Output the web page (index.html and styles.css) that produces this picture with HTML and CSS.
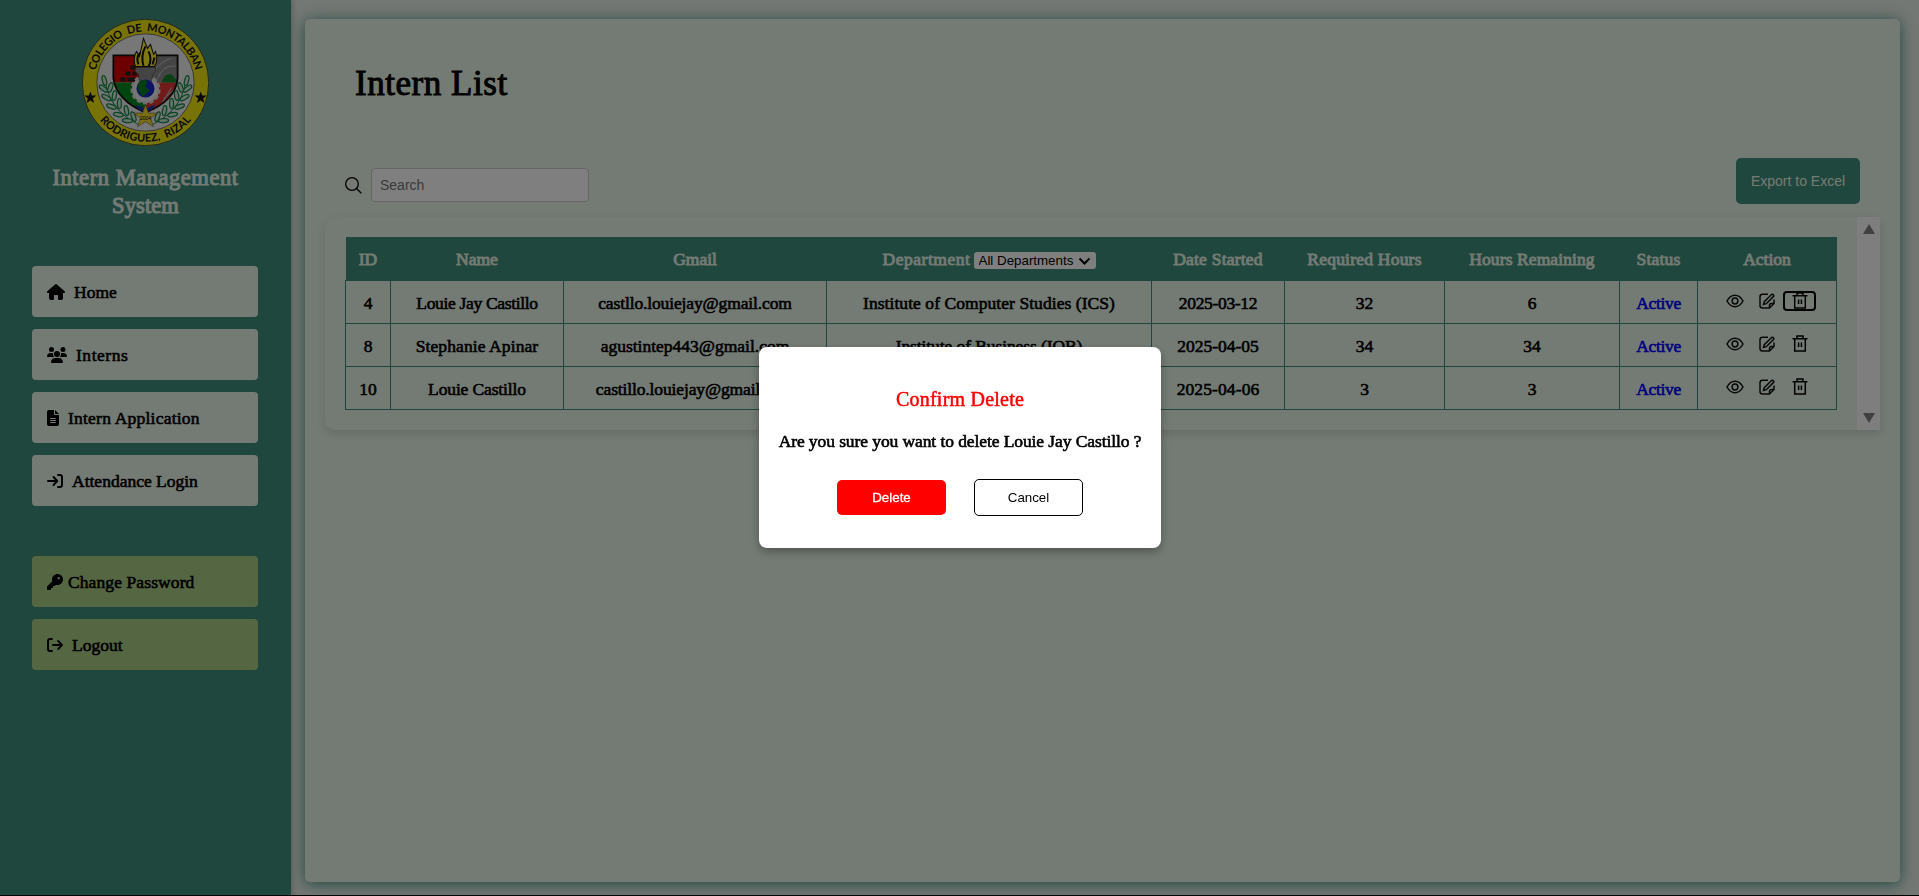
FILE: index.html
```html
<!DOCTYPE html>
<html lang="en">
<head>
<meta charset="utf-8">
<title>Intern List</title>
<link rel="stylesheet" href="styles.css">
</head>
<body>
<svg class="sprite" width="0" height="0" aria-hidden="true">
  <symbol id="eye" viewBox="0 0 18 14"><path d="M1 7C3 3.300 6 1.300 9 1.300S15 3.300 17 7C15 10.700 12 12.700 9 12.700S3 10.700 1 7Z"/><circle cx="9" cy="7" r="2.900"/></symbol>
  <symbol id="edit" viewBox="0 0 16 16"><path d="M9 1.200H3.500Q1 1.200 1 3.700V12.500Q1 15 3.500 15H10.500L15 10.500V6.500M10.500 15V12.500Q10.500 10.500 12.500 10.500H15"/><path d="M4.500 11.500 5.300 8.700 12.500 1.500Q13.700.9 14.500 2T14.300 3.700L7.300 10.700Z"/></symbol>
  <symbol id="trash" viewBox="0 0 16 17"><path d="M.5 3.700H15.500M5 3.500V1H11V3.500M2.700 4V16H13.300V4M6.600 7.500V12M9.400 7.500V12"/></symbol>
</svg>
<div class="app">
  <aside class="sidebar">
    <svg class="logo" viewBox="0.700 0.700 126.600 126.600">
      <defs>
        <path id="arc-top" d="M13 64A51 51 0 0 1 115 64"/>
        <path id="arc-bottom" d="M5 64A59 59 0 0 0 123 64"/>
        <clipPath id="shield"><path d="M32 37H96V60Q94 82 64 94Q35 82 32 60Z"/></clipPath>
        <g id="branch">
          <path class="stem" d="M24 64Q29 92 57 106"/>
          <g class="leaves">
            <ellipse cx="23" cy="62" rx="2" ry="5" transform="rotate(-15 23 62)"/>
            <ellipse cx="22" cy="70" rx="2" ry="5" transform="rotate(-50 22 70)"/><ellipse cx="29" cy="69" rx="2" ry="5" transform="rotate(20 29 69)"/>
            <ellipse cx="25" cy="79" rx="2" ry="5" transform="rotate(-60 25 79)"/><ellipse cx="33" cy="77" rx="2" ry="5" transform="rotate(10 33 77)"/>
            <ellipse cx="30" cy="88" rx="2" ry="5" transform="rotate(-70 30 88)"/><ellipse cx="38" cy="85" rx="2" ry="5" transform="rotate(0 38 85)"/>
            <ellipse cx="37" cy="96" rx="2" ry="5" transform="rotate(-80 37 96)"/><ellipse cx="45" cy="92" rx="2" ry="5" transform="rotate(-10 45 92)"/>
            <ellipse cx="46" cy="102" rx="2" ry="5" transform="rotate(-85 46 102)"/><ellipse cx="52" cy="98" rx="2" ry="5" transform="rotate(-20 52 98)"/>
          </g>
        </g>
      </defs>
      <circle cx="64" cy="64" r="63" fill="#f0e60a" stroke="#333" stroke-width=".8"/>
      <circle cx="64" cy="64" r="48.500" fill="#eee" stroke="#555" stroke-width=".8"/>
      <g clip-path="url(#shield)">
        <path fill="#d90000" d="M30 35H64V64H30Z"/><path fill="#888" d="M64 35H98V64H64Z"/>
        <path fill="#008a20" d="M30 64H64V96H30Z"/><path fill="#e03434" d="M64 64H98V96H64Z"/>
        <path fill="#222" d="M49 47h5v4h-5zM44 53h5v4h-5zM51 53h4v4h-4zM39 59h5v4h-5zM46 59h8v4h-8z"/>
        <path fill="#168028" d="M80 64Q83 54 90 56L97 64Z"/>
        <path fill="none" stroke="#bbb" d="M76 60Q82 45 96 48M72 53Q80 42 90 40M76 92 90 69M82 80 94 70"/>
      </g>
      <path fill="none" stroke="#111" stroke-width="1.800" d="M32 37H96V60Q94 82 64 94Q35 82 32 60Z"/>
      <use href="#branch"/><use href="#branch" transform="translate(128) scale(-1 1)"/>
      <circle cx="64" cy="71" r="13.500" fill="#eee" stroke="#ddd" stroke-width="3" stroke-dasharray="4 2.500"/>
      <path fill="#888" stroke="#444" stroke-width=".6" d="M54 49H74V53L71 56 70 63H58L57 56 54 53Z"/>
      <circle cx="64" cy="70" r="9" fill="#1a26c4"/><path fill="#087f28" d="M56 66Q59 60 66 62L64 68 68 72 62 78Q56 75 56 66Z"/>
      <path fill="#ffee20" stroke="#111" stroke-width="1" d="M54 48Q51 40 55 33L58 38 62 20 66 30 69 26 72 36 74 33Q77 42 73 48Z"/>
      <path fill="none" stroke="#111" stroke-width="2" d="M57 46Q54 39 59 34M62 48Q59 37 64 28M67 48Q71 41 67 33M71 46 73 39"/>
      <path fill="#2030b0" d="M54 86 64 90 74 86 70 92H58Z"/>
      <path fill="#f4de28" stroke="#555" stroke-width=".6" d="M64 86 67 94.500H76L69 99.500 72 108 64 103 56 108 59 99.500 52 94.500H61Z"/>
      <text class="year" x="64" y="101">2004</text>
      <path fill="#111" d="m9 73 1.500 4h4.500L11.500 80l1.300 4.500L9 82l-3.800 2.500L6.500 80 3 77h4.500ZM119 73l1.500 4h4.500l-3.500 3 1.300 4.500L119 82l-3.800 2.500 1.300-4.500L113 77h4.500Z"/>
      <text class="ring"><textPath href="#arc-top" startOffset="50%" textLength="136">COLEGIO DE MONTALBAN</textPath></text>
      <text class="ring"><textPath href="#arc-bottom" startOffset="50%" textLength="104">RODRIGUEZ, RIZAL</textPath></text>
    </svg>
    <h2 class="brand"><span class="s54">Intern Management</span><br><span class="s10">System</span></h2>
    <nav class="nav">
      <a class="item"><svg width="18" height="16" viewBox="0 0 576 512"><path d="M575.800 255.500c0 18-15 32.100-32 32.100h-32l.7 160.200c0 35.300-26.700 64.200-60 64.200H392c-22 0-40-18-40-40v-88c0-17.700-14.300-32-32-32h-64c-17.700 0-32 14.300-32 32v88c0 22-18 40-40 40h-56c-35 0-63-28-63-64V287.600H32c-18 0-32-14-32-32.100 0-9 3-17 10-24L266.400 8c7-7 15-8 22-8s15 2 21 7l255.400 224.500c8 7 12 15 11 24z"/></svg><span>Home</span></a>
      <a class="item"><svg width="20" height="16" viewBox="0 0 640 512"><path d="M144 0a80 80 0 1 1 0 160A80 80 0 1 1 144 0zM512 0a80 80 0 1 1 0 160A80 80 0 1 1 512 0zM0 298.700C0 239.800 47.800 192 106.700 192h42.700c15.900 0 31 3.500 44.600 9.700-1.300 7.200-1.900 14.700-1.900 22.300 0 38.200 16.800 72.500 43.300 96H21.300C9.600 320 0 310.400 0 298.700zM405.300 320c26.600-23.500 43.300-57.800 43.300-96 0-7.600-.7-15-1.900-22.300 13.600-6.300 28.700-9.700 44.600-9.700h42.700C592.200 192 640 239.800 640 298.700c0 11.800-9.600 21.300-21.300 21.300zM224 224a96 96 0 1 1 192 0 96 96 0 1 1-192 0zM128 485.300C128 411.700 187.700 352 261.300 352h117.400C452.300 352 512 411.700 512 485.300c0 14.700-11.900 26.700-26.700 26.700H154.700c-14.700 0-26.700-11.900-26.700-26.700z"/></svg><span class="s54">Interns</span></a>
      <a class="item"><svg width="12" height="16" viewBox="0 0 384 512"><path d="M64 0C28.700 0 0 28.700 0 64v384c0 35.300 28.700 64 64 64h256c35.300 0 64-28.700 64-64V160H256c-17.700 0-32-14.300-32-32V0zM256 0v128h128zM112 256h160c21 0 21 32 0 32H112c-21 0-21-32 0-32zm0 64h160c21 0 21 32 0 32H112c-21 0-21-32 0-32zm0 64h160c21 0 21 32 0 32H112c-21 0-21-32 0-32z"/></svg><span class="s20">Intern Application</span></a>
      <a class="item"><svg class="line" width="16" height="16" viewBox="0 0 16 16"><path d="M1 8H10M6.500 4 10.300 8 6.500 12M11 2H13Q15 2 15 4V12Q15 14 13 14H11"/></svg><span>Attendance Login</span></a>
      <a class="item account first"><svg width="16" height="16" viewBox="0 0 512 512"><path d="M336 352c97.200 0 176-78.800 176-176S433.200 0 336 0 160 78.800 160 176c0 18.700 2.900 36.800 8.300 53.700L7 391c-4.500 4.500-7 10.600-7 17v80c0 13.300 10.700 24 24 24h80c13.300 0 24-10.700 24-24v-40h40c13.300 0 24-10.700 24-24v-40h40c6.400 0 12.500-2.500 17-7l33.300-33.300c16.900 5.400 35 8.300 53.700 8.300zM376 96a40 40 0 1 1 0 80 40 40 0 1 1 0-80z"/></svg><span class="s10">Change Password</span></a>
      <a class="item account"><svg class="line" width="16" height="16" viewBox="0 0 16 16"><path d="M6 8H15M11.200 4 15 8 11.200 12M5 2H3Q1 2 1 4V12Q1 14 3 14H5"/></svg><span>Logout</span></a>
    </nav>
  </aside>
  <main class="panel">
    <h1><span class="s54">Intern List</span></h1>
    <div class="tools">
      <svg class="glass" width="17" height="17" viewBox="0 0 17 17"><circle cx="7" cy="7" r="6.300"/><path d="M11.500 11.500 16.300 16.300"/></svg>
      <input class="search" placeholder="Search">
      <button class="export">Export to Excel</button>
    </div>
    <section class="sheet">
      <table>
        <colgroup><col class="c1"><col class="c2"><col class="c3"><col class="c4"><col class="c5"><col class="c6"><col class="c7"><col class="c8"><col class="c9"></colgroup>
        <thead><tr><th><span>ID</span></th><th><span>Name</span></th><th><span>Gmail</span></th><th><span class="s54">Department</span><span class="pick"><select><option>All Departments</option></select><svg width="13" height="9" viewBox="0 0 13 9"><path d="M1.500 1.500 6.500 6.500 11.500 1.500"/></svg></span></th><th><span class="s20">Date Started</span></th><th><span class="s20">Required Hours</span></th><th><span class="s10">Hours Remaining</span></th><th><span class="s20">Status</span></th><th><span>Action</span></th></tr></thead>
        <tbody>
          <tr><td>4</td><td><span class="n30">Louie Jay Castillo</span></td><td><span class="n13">castllo.louiejay@gmail.com</span></td><td><span class="s06">Institute of Computer Studies (ICS)</span></td><td><span class="n30">2025-03-12</span></td><td>32</td><td>6</td><td class="active"><span class="n30">Active</span></td><td><div class="acts"><svg class="eye"><use href="#eye"/></svg><svg class="edit"><use href="#edit"/></svg><button class="del focus"><svg><use href="#trash"/></svg></button></div></td></tr>
          <tr><td>8</td><td><span class="s10">Stephanie Apinar</span></td><td><span>agustintep443@gmail.com</span></td><td><span class="n08">Institute of Business (IOB)</span></td><td><span>2025-04-05</span></td><td>34</td><td>34</td><td class="active"><span class="n30">Active</span></td><td><div class="acts"><svg class="eye"><use href="#eye"/></svg><svg class="edit"><use href="#edit"/></svg><button class="del"><svg><use href="#trash"/></svg></button></div></td></tr>
          <tr><td>10</td><td><span class="n13">Louie Castillo</span></td><td><span class="n13">castillo.louiejay@gmail.com</span></td><td></td><td><span class="s10">2025-04-06</span></td><td>3</td><td>3</td><td class="active"><span class="n30">Active</span></td><td><div class="acts"><svg class="eye"><use href="#eye"/></svg><svg class="edit"><use href="#edit"/></svg><button class="del"><svg><use href="#trash"/></svg></button></div></td></tr>
        </tbody>
      </table>
      <div class="bar"><svg width="14" height="12" viewBox="0 0 14 12"><path d="M7 1 13 11H1Z"/></svg><svg width="14" height="12" viewBox="0 0 14 12"><path d="M7 11 1 1H13Z"/></svg></div>
    </section>
  </main>
</div>
<div class="overlay">
  <div class="dialog">
    <h3><span class="s20">Confirm Delete</span></h3>
    <p><span class="n08">Are you sure you want to delete Louie Jay Castillo ?</span></p>
    <div class="choices"><button class="yes">Delete</button><button class="no">Cancel</button></div>
  </div>
</div>
</body>
</html>
```
FILE: styles.css
```css
* { box-sizing: border-box; }
body { margin: 0; height: 896px; overflow: hidden; background: #e9f0ea; font-family: "Liberation Serif", serif; font-size: 17.5px; color: #000; -webkit-text-stroke: .6px; }
h1, h2, h3, p { margin: 0; font-weight: 400; }
button, input, select { font-family: "Liberation Sans", sans-serif; -webkit-text-stroke: 0; }
.sprite { position: absolute; }

/* tracking steps */
.s54 { letter-spacing: .54px; } .s20 { letter-spacing: .22px; } .s10 { letter-spacing: .1px; } .s06 { letter-spacing: .06px; }
.n08 { letter-spacing: -.09px; } .n13 { letter-spacing: -.13px; } .n30 { letter-spacing: -.33px; }

.app { display: flex; height: 896px; border-bottom: 1px solid #000; }
.sidebar { width: 291px; padding: 19px 32px 0; background: #3f8e7b; box-shadow: 2px 0 5px rgba(0,0,0,.2); display: flex; flex-direction: column; align-items: center; }
.logo { width: 127px; height: 127px; flex: none; }
.ring { font: 700 11px Lato, sans-serif; word-spacing: 3px; text-anchor: middle; fill: #111; -webkit-text-stroke: 0; }
.year { font: 5px "Liberation Sans", sans-serif; text-anchor: middle; -webkit-text-stroke: 0; }
.stem { fill: none; stroke: #168848; stroke-width: 1; }
.leaves { fill: #cfe8d8; stroke: #168848; stroke-width: 1.3; }
.brand { margin-top: 18px; font-size: 22.500px; line-height: 28px; color: #e8f5e9; text-align: center; white-space: nowrap; -webkit-text-stroke: 1px; }
.nav { align-self: stretch; margin-top: 46px; display: flex; flex-direction: column; gap: 12px; width: 226px; }
.item { height: 51px; padding: 1px 0 0 15px; border-radius: 4px; background: #e8f5e9; display: flex; align-items: center; gap: 9px; white-space: nowrap; }
.item .line { fill: none; stroke: #000; stroke-width: 1.900; stroke-linecap: round; stroke-linejoin: round; }
.account { background: #aacc87; }
.first { margin-top: 38px; gap: 5px; }
.panel { width: 1595px; height: 863px; margin: 19px 0 0 14px; border-radius: 5px; background: #e8f5e9; box-shadow: 0 2px 16px #3f8e7b; }
h1 { height: 139px; padding: 45px 0 0 50px; font-size: 35px; line-height: 40px; -webkit-text-stroke: 1px; }
.tools { display: flex; height: 59px; padding: 0 40px; }
.glass { margin: 19px 9px 0 0; fill: none; stroke: #000; stroke-width: 1.300; }
.search { width: 218px; height: 34px; margin-top: 10px; padding: 0 8px; border: 1px solid #ccc; border-radius: 4px; font-size: 14px; background: #fff; }
.export { margin-left: auto; width: 124px; height: 46px; padding: 0; border: 0; border-radius: 5px; background: #3f8e7b; color: #e8f5e9; font-size: 14px; }
.sheet { margin-left: 20px; width: 1555px; height: 213px; padding: 20px 0 0 20px; border-radius: 10px 0 0 10px; background: #e8f5e9; box-shadow: 0 4px 10px rgba(0,0,0,.12); display: flex; justify-content: space-between; }
table { width: 1491px; height: 173px; border-collapse: collapse; table-layout: fixed; }
.c1 { width: 45px; } .c2 { width: 173px; } .c3 { width: 263px; } .c4 { width: 325px; } .c5 { width: 133px; } .c6 { width: 160px; } .c7 { width: 175px; } .c8 { width: 78px; } .c9 { width: 139px; }
th, td { padding: 3px 0 0; text-align: center; white-space: nowrap; }
tr { height: 43px; }
th { background: #3f8e7b; color: #e8f5e9; font-weight: 400; -webkit-text-stroke: .85px; }
td { border: 1px solid #3f8e7b; }
.active { color: #00f; }
.pick { display: inline-flex; position: relative; top: -1px; vertical-align: middle; margin-left: 3px; }
.pick select { appearance: none; width: 122px; height: 17px; padding: 0 0 0 5px; border: 0; border-radius: 3px; background: #fff; color: #000; font-size: 13.333px; line-height: 17px; }
.pick svg { position: absolute; right: 5px; top: 5px; fill: none; stroke: #000; stroke-width: 2; }
.acts { display: flex; align-items: center; height: 20px; margin-top: -5px; padding-left: 28px; fill: none; stroke: #111; stroke-width: 1.500; }
.eye { width: 18px; height: 14px; }
.edit { width: 16px; height: 16px; margin-left: 15px; }
.del { display: flex; align-items: center; justify-content: center; width: 33px; height: 20px; margin-left: 8px; padding: 0; border: 0; background: none; fill: none; stroke: #000; }
.del svg { width: 16px; height: 17px; flex: none; }
.focus { border: 2px solid #000; border-radius: 4px; }
.bar { width: 23px; height: 213px; margin-top: -20px; padding: 6px 5px; background: #fcfcfc; fill: #808080; display: flex; flex-direction: column; justify-content: space-between; }
.overlay { position: fixed; inset: 0; background: rgba(0,0,0,.5); display: flex; align-items: flex-start; justify-content: center; padding: 347px 0 0 1px; }
.dialog { width: 402px; height: 201px; border-radius: 8px; background: #fff; box-shadow: 0 4px 10px rgba(0,0,0,.3); text-align: center; white-space: nowrap; padding-top: 40px; }
h3 { color: #f00; font-size: 20px; line-height: 24px; -webkit-text-stroke: .5px; }
p { margin-top: 18px; line-height: 24px; }
.choices { display: flex; justify-content: center; align-items: center; gap: 28px; margin-top: 26px; }
.choices button { width: 109px; height: 35px; border: 0; border-radius: 5px; font-size: 13.333px; }
.choices .yes { background: #f00; color: #fff; -webkit-text-stroke: .3px; }
.choices .no { height: 37px; background: #fff; border: 1px solid #000; }
```
